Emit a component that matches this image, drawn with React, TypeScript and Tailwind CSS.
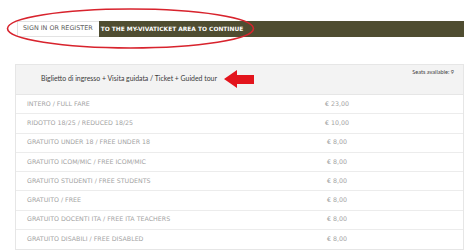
import React from "react";

interface Fare {
  label: string;
  price: string;
}

const fares: Fare[] = [
  { label: "INTERO / FULL FARE", price: "€ 23,00" },
  { label: "RIDOTTO 18/25 / REDUCED 18/25", price: "€ 10,00" },
  { label: "GRATUITO UNDER 18 / FREE UNDER 18", price: "€ 8,00" },
  { label: "GRATUITO ICOM/MIC / FREE ICOM/MIC", price: "€ 8,00" },
  { label: "GRATUITO STUDENTI / FREE STUDENTS", price: "€ 8,00" },
  { label: "GRATUITO / FREE", price: "€ 8,00" },
  { label: "GRATUITO DOCENTI ITA / FREE ITA TEACHERS", price: "€ 8,00" },
  { label: "GRATUITO DISABILI / FREE DISABLED", price: "€ 8,00" },
];

export default function App() {
  return (
    <div
      className="relative w-[474px] h-[251px] overflow-hidden bg-white"
      style={{ fontFamily: "'DejaVu Sans', 'Liberation Sans', sans-serif" }}
    >
      {/* sign-in banner */}
      <div className="flex pl-[17px] pr-[10px] pt-[21px] h-[37px]">
        <div className="flex items-center border border-r-0 border-[#e3e3e3] pl-[5px] pr-[6px] text-[6.4px] text-[#5a5a5a]">
          SIGN IN OR REGISTER
        </div>
        <div className="flex-1 flex items-center bg-[#4f4d31] pl-[2px] text-[5.9px] font-bold text-white">
          TO THE MY-VIVATICKET AREA TO CONTINUE
        </div>
      </div>

      {/* tickets table */}
      <div className="ml-[15px] mr-[10px] mt-[27px] border border-[#e6e6e6]">
        <div
          className="flex h-[30px] bg-[#f3f3f3] border-b border-[#e6e6e6]"
          style={{ fontFamily: "Lato, 'Liberation Sans', sans-serif" }}
        >
          <div className="w-[226px] flex items-center justify-center pb-[2px] text-[6.9px] text-[#3a3a3a]">
            Biglietto di ingresso + Visita guidata / Ticket + Guided tour
          </div>
          <div className="flex-1 flex justify-end pr-[9px] pt-[3px] text-[5.6px] text-[#444]">
            Seats available: 9
          </div>
        </div>
        {fares.map((fare, i) => (
          <div
            key={i}
            className="flex items-center h-[19.25px] pb-[1px] border-b border-[#ececec] last:border-b-0 text-[6.3px] text-[#a3a3a3]"
          >
            <span className="w-[270px] pl-[11px]">{fare.label}</span>
            <span className="w-[102px] text-center">{fare.price}</span>
          </div>
        ))}
      </div>

      {/* red annotations */}
      <svg
        className="absolute left-0 top-0 pointer-events-none"
        width="474"
        height="251"
        viewBox="0 0 474 251"
      >
        <ellipse
          cx="130.5"
          cy="28.5"
          rx="123"
          ry="19.5"
          fill="none"
          stroke="#d8232d"
          strokeWidth="1.6"
        />
        <polygon
          points="224,79 237,70 237,75 254,75 254,84 237,84 237,88"
          fill="#e3141c"
        />
      </svg>
    </div>
  );
}
